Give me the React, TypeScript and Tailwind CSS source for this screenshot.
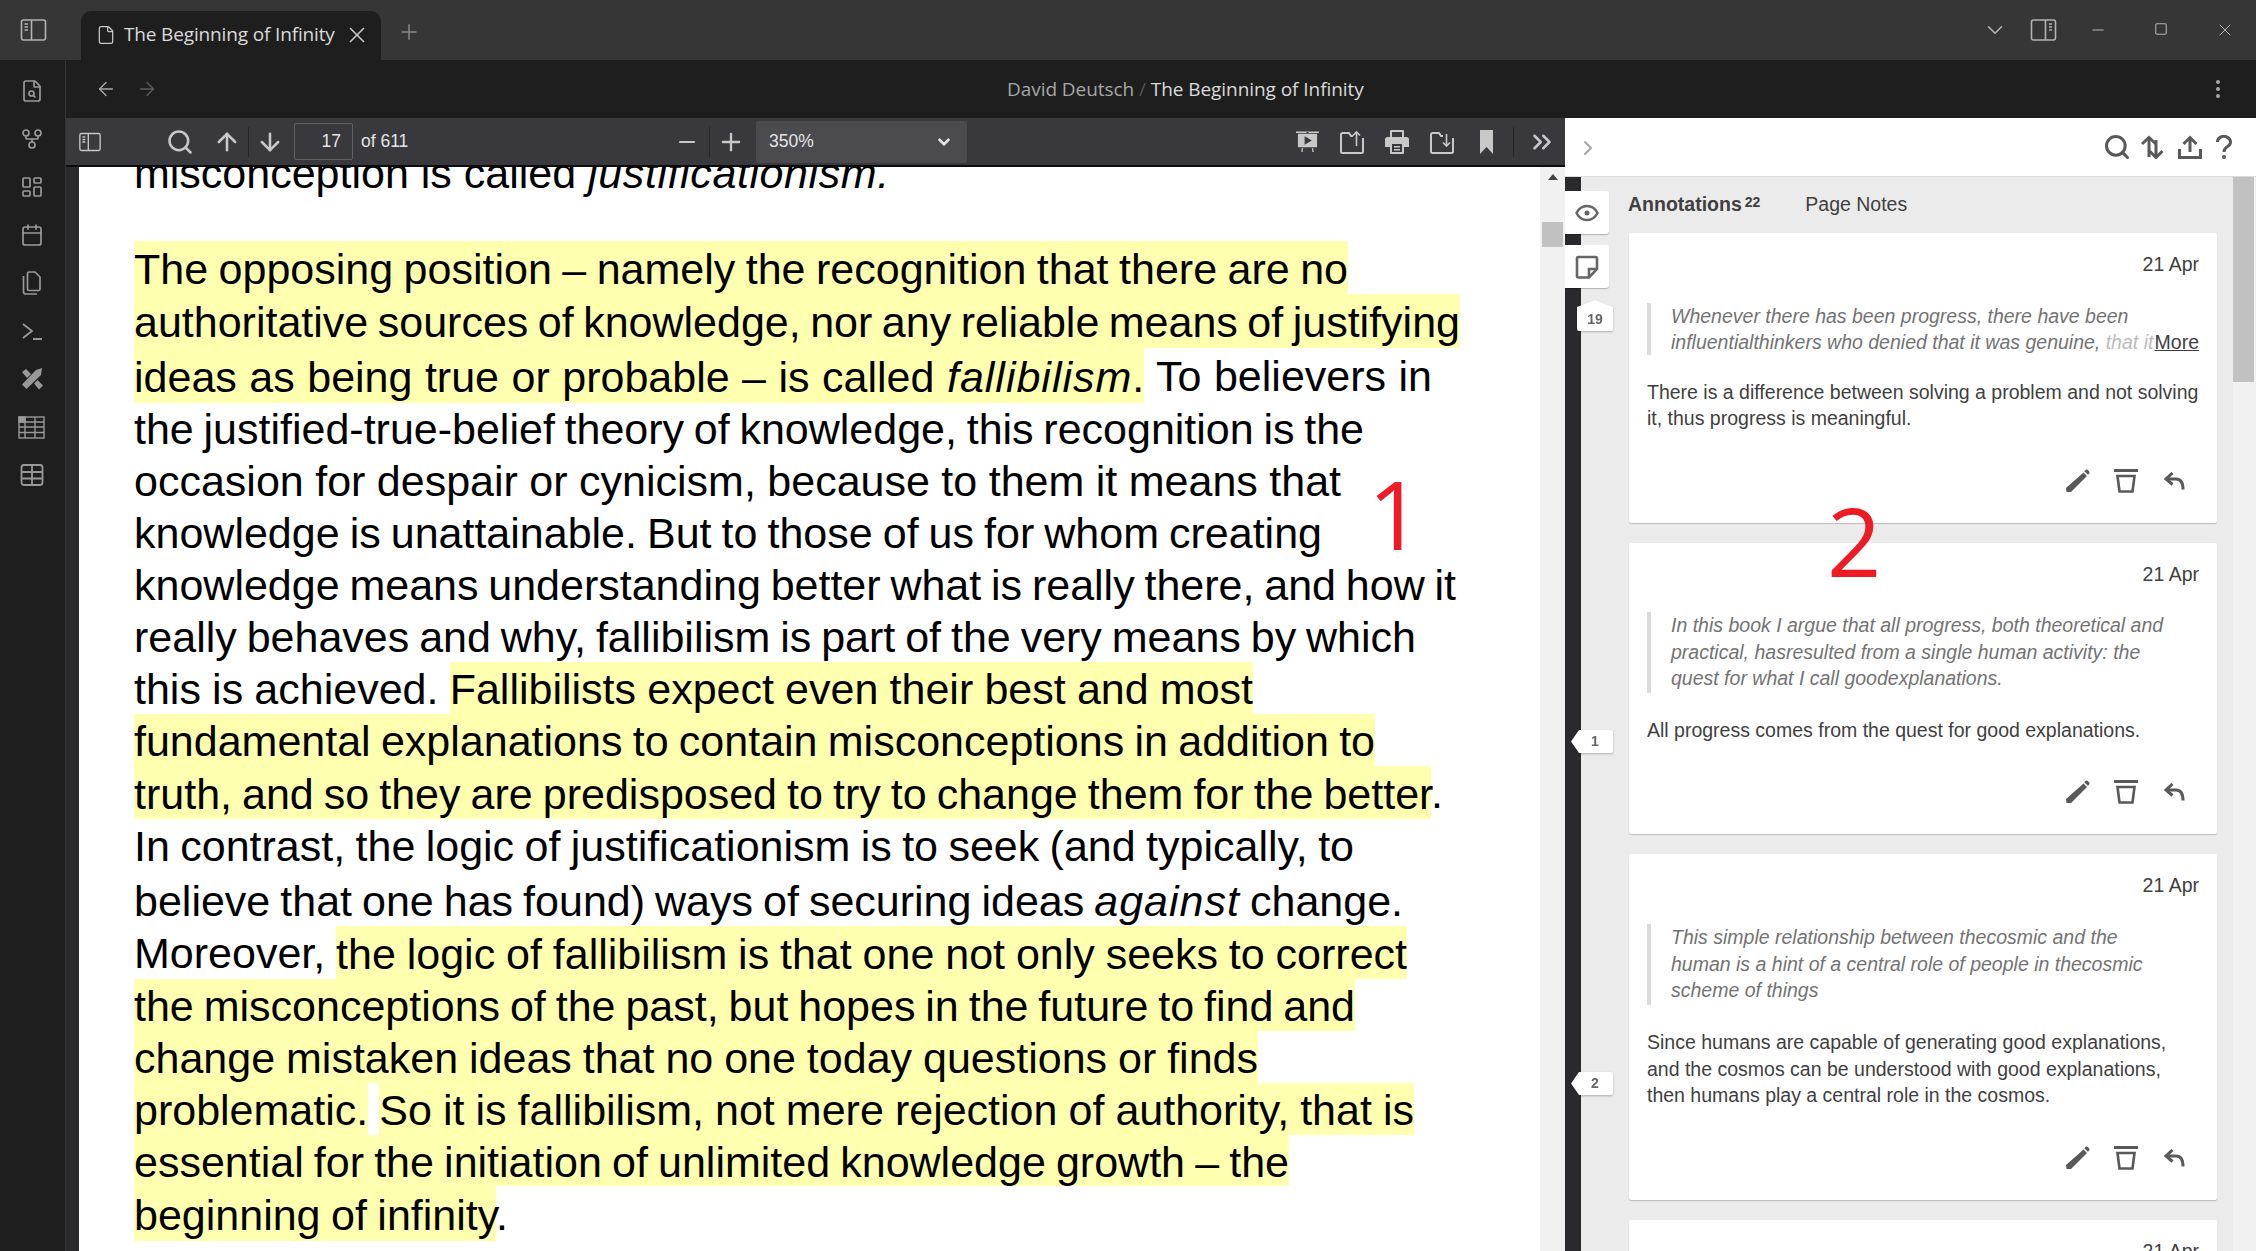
import {
  ArrowDown,
  ArrowLeft,
  ArrowRight,
  ArrowUp,
  Calendar,
  ChevronDown,
  ChevronRight,
  ChevronsRight,
  EllipsisVertical,
  File,
  FileSearch,
  GitFork,
  LayoutDashboard,
  Minus,
  Plus,
  Search,
  Square,
  X,
} from "lucide-react";

type Seg = { t: string; hl?: boolean; it?: boolean };
type Row = { box: string; pad: string; segs: Seg[] };

const rows: Row[] = [
  { box: "h-[53px] pt-[1px] leading-[53px] w-[1214px]", pad: "pt-[3.5px] pb-[1.5px]", segs: [{ t: "The opposing position – namely the recognition that there are no", hl: true }] },
  { box: "h-[54px] pt-[1px] leading-[54px] w-[1326px]", pad: "pt-[4px] pb-[2px]", segs: [{ t: "authoritative sources of knowledge, nor any reliable means of justifying", hl: true }] },
  { box: "h-[54px] pt-[1px] leading-[54px] w-[1298px]", pad: "pt-[4.5px] pb-[2.5px]", segs: [{ t: "ideas as being true or probable – is called ", hl: true }, { t: "fallibilism", hl: true, it: true }, { t: ".", hl: true }, { t: " To believers in" }] },
  { box: "h-[52px] pt-[1px] leading-[52px] w-[1230px]", pad: "", segs: [{ t: "the justified-true-belief theory of knowledge, this recognition is the" }] },
  { box: "h-[52px] pt-[1px] leading-[52px] w-[1207px]", pad: "", segs: [{ t: "occasion for despair or cynicism, because to them it means that" }] },
  { box: "h-[52px] pt-[1px] leading-[52px] w-[1188px]", pad: "", segs: [{ t: "knowledge is unattainable. But to those of us for whom creating" }] },
  { box: "h-[52px] pt-[1px] leading-[52px] w-[1322px]", pad: "", segs: [{ t: "knowledge means understanding better what is really there, and how it" }] },
  { box: "h-[52px] pt-[1px] leading-[52px] w-[1282px]", pad: "", segs: [{ t: "really behaves and why, fallibilism is part of the very means by which" }] },
  { box: "h-[52px] pt-[1px] leading-[52px] w-[1119px]", pad: "pt-[3px] pb-[1px]", segs: [{ t: "this is achieved. " }, { t: "Fallibilists expect even their best and most", hl: true }] },
  { box: "h-[52px] pt-[1px] leading-[52px] w-[1241px]", pad: "pt-[3px] pb-[1px]", segs: [{ t: "fundamental explanations to contain misconceptions in addition to", hl: true }] },
  { box: "h-[53px] pt-[1px] leading-[53px] w-[1309px]", pad: "pt-[3.5px] pb-[1.5px]", segs: [{ t: "truth, and so they are predisposed to try to change them for the better", hl: true }, { t: "." }] },
  { box: "h-[52px] pt-[1px] leading-[52px] w-[1220px]", pad: "", segs: [{ t: "In contrast, the logic of justificationism is to seek (and typically, to" }] },
  { box: "h-[55px] pt-[3px] leading-[55px] w-[1269px]", pad: "", segs: [{ t: "believe that one has found) ways of securing ideas " }, { t: "against", it: true }, { t: " change." }] },
  { box: "h-[53px] pt-[1px] leading-[53px] w-[1273px]", pad: "pt-[3.5px] pb-[1.5px]", segs: [{ t: "Moreover, " }, { t: "the logic of fallibilism is that one not only seeks to correct", hl: true }] },
  { box: "h-[52px] pt-[1px] leading-[52px] w-[1221px]", pad: "pt-[3px] pb-[1px]", segs: [{ t: "the misconceptions of the past, but hopes in the future to find and", hl: true }] },
  { box: "h-[52px] pt-[1px] leading-[52px] w-[1124px]", pad: "pt-[3px] pb-[1px]", segs: [{ t: "change mistaken ideas that no one today questions or finds", hl: true }] },
  { box: "h-[52px] pt-[1px] leading-[52px] w-[1280px]", pad: "pt-[3px] pb-[1px]", segs: [{ t: "problematic.", hl: true }, { t: " " }, { t: "So it is fallibilism, not mere rejection of authority, that is", hl: true }] },
  { box: "h-[51px] pt-[1px] leading-[51px] w-[1155px]", pad: "pt-[2.5px] pb-[0.5px]", segs: [{ t: "essential for the initiation of unlimited knowledge growth – the", hl: true }] },
  { box: "h-[52px] pt-[3px] leading-[52px] w-[374px]", pad: "pt-[5px] pb-[2px]", segs: [{ t: "beginning of infinity", hl: true }, { t: "." }] },
];

function PanelIcon({ flip = false, className = "" }: { flip?: boolean; className?: string }) {
  return (
    <svg viewBox="0 0 26 22" fill="none" stroke="currentColor" strokeWidth="1.6" className={className}>
      <rect x="1" y="1" width="24" height="20" rx="2" />
      <path d={flip ? "M15 1v20" : "M11 1v20"} />
      <path d={flip ? "M18.5 5h3M18.5 8h3M18.5 11h3" : "M4 5h3.5M4 8h3.5M4 11h3.5"} />
    </svg>
  );
}

function CopyIcon() {
  return (
    <svg viewBox="0 0 22 24" fill="none" stroke="currentColor" strokeWidth="1.7" className="h-6 w-6">
      <path d="M8 1h6l5 5v12a1.5 1.5 0 0 1-1.5 1.5H8A1.5 1.5 0 0 1 6.500 18V2.500A1.500 1.500 0 0 1 8 1Z" />
      <path d="M2.500 5v15.500A2.500 2.500 0 0 0 5 23h11" />
    </svg>
  );
}

function TerminalIcon() {
  return (
    <svg viewBox="0 0 24 24" fill="none" stroke="currentColor" strokeWidth="1.800" className="h-6 w-6">
      <path d="M3 5l9 7-9 7M13 20h9" />
    </svg>
  );
}

function ToolsIcon() {
  return (
    <svg viewBox="0 0 24 24" fill="currentColor" className="h-6 w-6">
      <path d="M22 1l-1 7L6.500 22 2 17.500 16 3Z" />
      <path d="M2 5l4-3 5 5-4 4ZM14 16.500l3.500-3.500 5.500 5.500-4 4Z" />
    </svg>
  );
}

function SheetIcon() {
  return (
    <svg viewBox="0 0 27 23" fill="none" stroke="currentColor" strokeWidth="1.400" className="h-[23px] w-[27px]">
      <rect x="1" y="1" width="25" height="21" />
      <rect x="1" y="1" width="6" height="5" fill="currentColor" />
      <path d="M1 6h25M1 11h25M1 16.500h25M7 1v21M17 1v21" />
    </svg>
  );
}

function GridIcon() {
  return (
    <svg viewBox="0 0 24 24" fill="none" stroke="currentColor" strokeWidth="1.800" className="h-6 w-6">
      <rect x="1.500" y="2" width="21" height="20" rx="2.500" />
      <path d="M1.500 9h21M1.500 15.500h21M12 2v20" />
    </svg>
  );
}

function PresentIcon() {
  return (
    <svg viewBox="0 0 24 24" fill="currentColor" className="h-[23px] w-[23px]">
      <path d="M0 1.500h24V3H13v-2h-2v2H0Z" />
      <path fillRule="evenodd" d="M2 4h20v14H2ZM9 6.500v9l7.500-4.500Z" />
      <path d="M6 19h1.500l-.6 4H5.500ZM16.500 19H18l.5 4h-1.400Z" />
    </svg>
  );
}

function FolderUpIcon({ down = false }: { down?: boolean }) {
  return (
    <svg viewBox="0 0 24 24" fill="none" stroke="currentColor" strokeWidth="2" className="h-6 w-6">
      <path d="M13 6H11L9 3H2.500A1.500 1.500 0 0 0 1 4.500V21.500A1.500 1.500 0 0 0 2.500 23h19a1.500 1.500 0 0 0 1.500-1.500V8" />
      {down ? (
        <path strokeWidth="1.600" d="M16.500 4v12M13 12.500l3.500 3.500 3.500-3.500" />
      ) : (
        <path strokeWidth="1.600" d="M16.500 16V2M13 5.500L16.500 2 20 5.500" />
      )}
    </svg>
  );
}

function PrintIcon() {
  return (
    <svg viewBox="0 0 24 24" fill="currentColor" className="h-6 w-6">
      <path fillRule="evenodd" d="M6 0h12a1 1 0 0 1 1 1v6h2.500A2.500 2.500 0 0 1 24 9.500V17h-5v6a1 1 0 0 1-1 1H6a1 1 0 0 1-1-1v-6H0V9.500A2.500 2.500 0 0 1 2.500 7H5V1a1 1 0 0 1 1-1Zm1 2v5h10V2ZM7 14v8h10v-8Zm2 2h6v1.500H9Zm0 3h6v1.500H9Z" />
    </svg>
  );
}

function BookmarkIcon() {
  return (
    <svg viewBox="0 0 13 24" fill="currentColor" className="h-6 w-[13px]">
      <path d="M0 0h13v24l-6.500-7L0 24Z" />
    </svg>
  );
}

function SortIcon() {
  return (
    <svg viewBox="0 0 24 24" fill="none" stroke="#595959" strokeWidth="3" className="h-6 w-6">
      <path d="M9 22V3M2 9l7-6.500L16 9" />
      <path d="M16 5v17M9.500 16l6.500 6.500 6.500-6.500" />
    </svg>
  );
}

function UploadIcon() {
  return (
    <svg viewBox="0 0 24 24" fill="none" stroke="#595959" strokeWidth="3" className="h-6 w-6">
      <path d="M12 17V2.500M5.500 9L12 2.500 18.500 9M1.500 14v8.500h21V14" />
    </svg>
  );
}

function HelpIcon() {
  return (
    <svg viewBox="0 0 16 24" fill="none" stroke="#595959" strokeWidth="3" className="h-6 w-4">
      <path d="M1.500 7a6.500 5.500 0 1 1 10 4.500C9 13 8 14 8 17" />
      <circle cx="8" cy="22" r="2" fill="#595959" stroke="none" />
    </svg>
  );
}

function PencilIcon() {
  return (
    <svg viewBox="0 0 25 24" fill="#595959" className="h-6 w-[25px]">
      <path d="M18.500 3.500L22 7 6 23H1.500L1 19ZM20 1.500a2 2 0 0 1 2.800-.5l1.200 1.200a2 2 0 0 1-.3 2.800l-.8.700L19.300 2.200Z" />
    </svg>
  );
}

function TrashIcon() {
  return (
    <svg viewBox="0 0 24 24" fill="none" stroke="#595959" strokeWidth="3" className="h-6 w-6">
      <path d="M0 1.500h24" />
      <path strokeWidth="2.600" d="M3.500 7l2 15.500h13L20.500 7Z" />
    </svg>
  );
}

function ReplyIcon() {
  return (
    <svg viewBox="0 0 21 18" fill="none" stroke="#595959" strokeWidth="3" className="h-[18px] w-[21px]">
      <path d="M8.500 1L2 7l6.500 5.500" />
      <path d="M2.500 7H12c4.500 0 7 3.500 7 10.500" />
    </svg>
  );
}

function Bucket({ label, up = false, className }: { label: string; up?: boolean; className: string }) {
  return (
    <div className={`absolute flex items-end justify-center drop-shadow-[0_1px_1px_rgba(0,0,0,0.25)] ${className}`}>
      <svg viewBox={up ? "0 0 36 31" : "0 0 42 23"} fill="white" className="absolute inset-0 h-full w-full">
        <path
          d={
            up
              ? "M18 0L36 7V29a2 2 0 0 1-2 2H2a2 2 0 0 1-2-2V7Z"
              : "M8 0H40a2 2 0 0 1 2 2V21a2 2 0 0 1-2 2H8L0 11.500Z"
          }
        />
      </svg>
      <span className={`relative text-[14px] leading-[23px] font-bold text-[#666] ${up ? "" : "pl-[6px]"}`}>
        {label}
      </span>
    </div>
  );
}

function Card({
  quote,
  comment,
  bar,
  body,
  foot,
  more = false,
}: {
  quote: string[];
  comment: string[];
  bar: string;
  body: string;
  foot: string;
  more?: boolean;
}) {
  return (
    <article className="rounded-[2px] bg-white px-[18px] pt-[18px] pb-[30px] text-[19.500px] leading-[26.600px] shadow-[0_1px_1px_rgba(0,0,0,0.2)]">
      <div className="h-[26px] text-right text-[#3f3f3f]">21 Apr</div>
      <div className={`relative border-l-[4px] border-[#dbdbdb] pl-[20px] text-[#737373] italic ${bar}`}>
        {quote.map((line, i) => (
          <div key={i} className="whitespace-nowrap">
            {more && i === 1 ? (
              <>
                influentialthinkers who denied that it was genuine, <span className="text-[#bcbcbc]">that it</span>
              </>
            ) : (
              line
            )}
          </div>
        ))}
        {more && (
          <a className="absolute right-0 bottom-0 bg-white text-[#3f3f3f] not-italic underline">More</a>
        )}
      </div>
      <div className={`text-[#3f3f3f] ${body}`}>
        {comment.map((line, i) => (
          <div key={i} className="whitespace-nowrap">
            {line}
          </div>
        ))}
      </div>
      <div className={`flex h-6 items-center justify-end pr-[14px] ${foot}`}>
        <PencilIcon />
        <div className="ml-[24px]">
          <TrashIcon />
        </div>
        <div className="ml-[26px]">
          <ReplyIcon />
        </div>
      </div>
    </article>
  );
}

export default function App() {
  return (
    <div className="relative flex h-[1251px] w-[2256px] flex-col overflow-hidden bg-[#1e1e1e] [font-family:'Liberation_Sans',Arial,sans-serif]">
      {/* title bar */}
      <header className="flex h-[60px] shrink-0 items-end bg-[#363636] text-[#b3b3b3]">
        <div className="mb-[19px] ml-[20px]">
          <PanelIcon className="h-[22px] w-[27px]" />
        </div>
        <div className="ml-[34px] flex h-[49px] w-[300px] items-center rounded-t-[10px] bg-[#1e1e1e] pb-[2px] pl-[15px]">
          <File size={20} strokeWidth={1.500} className="text-[#c8c8c8]" />
          <span className="ml-[8px] w-[212px] text-[19px] whitespace-nowrap text-[#dadada] [font-family:'Open_Sans',sans-serif] tracking-[-0.150px]">
            The Beginning of Infinity
          </span>
          <X size={26} strokeWidth={1.500} className="ml-[8px] text-[#c8c8c8]" />
        </div>
        <Plus size={24} strokeWidth={1.500} className="mb-[16px] ml-[16px] text-[#8a8a8a]" />
        <ChevronDown size={26} strokeWidth={1.500} className="mb-[17px] ml-auto" />
        <PanelIcon flip className="mb-[19px] ml-[22px] h-[22px] w-[27px]" />
        <Minus size={18} strokeWidth={1.500} className="mb-[21px] ml-[32px]" />
        <Square size={14} strokeWidth={1.800} className="mb-[24px] ml-[47px]" />
        <X size={20} strokeWidth={1.200} className="mb-[20px] mr-[21px] ml-[47px]" />
      </header>

      <div className="flex min-h-0 flex-1">
        {/* ribbon */}
        <nav className="flex w-[66px] shrink-0 flex-col items-center gap-[24px] border-r border-[#333] pt-[19px] pr-[2px] text-[#999]">
          <FileSearch size={24} strokeWidth={1.700} />
          <GitFork size={24} strokeWidth={1.700} />
          <LayoutDashboard size={24} strokeWidth={1.700} />
          <Calendar size={24} strokeWidth={1.700} />
          <CopyIcon />
          <TerminalIcon />
          <ToolsIcon />
          <div className="flex h-6 items-center">
            <SheetIcon />
          </div>
          <GridIcon />
        </nav>

        <div className="flex min-w-0 flex-1 flex-col">
          {/* nav bar */}
          <div className="flex h-[58px] shrink-0 items-center pl-[29px] pr-[26px] text-[#a8a8a8]">
            <ArrowLeft size={22} strokeWidth={1.500} />
            <ArrowRight size={22} strokeWidth={1.500} className="ml-[19px] text-[#5c5c5c]" />
            <div className="ml-[849px] text-[19px] whitespace-nowrap text-[#a6a6a6] [font-family:'Open_Sans',sans-serif] tracking-[-0.060px]">
              David Deutsch <span className="text-[#555]">/</span>{" "}
              <span className="text-[#dadada]">The Beginning of Infinity</span>
            </div>
            <EllipsisVertical size={24} strokeWidth={2} className="ml-auto" />
          </div>

          <div className="flex min-h-0 flex-1">
            {/* pdf viewer */}
            <section className="flex w-[1499px] shrink-0 flex-col">
              <div className="flex h-[49px] shrink-0 items-center border-b-2 border-[#0c0c0d] bg-[#38383d] pl-[13px] text-[#c8c8c8]">
                <PanelIcon className="h-[20px] w-[22px]" />
                <Search size={28} strokeWidth={2.200} className="ml-[65px]" />
                <ArrowUp size={28} strokeWidth={2.200} className="ml-[19px]" />
                <div className="ml-[7px] h-[30px] w-px bg-[#26262a]" />
                <ArrowDown size={28} strokeWidth={2.200} className="ml-[7px]" />
                <div className="ml-[10px] flex h-[37px] w-[59px] items-center justify-end rounded-[2px] border border-[#606065] pr-[11px] text-[17.500px] text-[#e4e4e4]">
                  17
                </div>
                <span className="ml-[8px] w-[47px] text-[17.500px] whitespace-nowrap text-[#e4e4e4]">of 611</span>
                <Minus size={24} strokeWidth={2.200} className="ml-[267px]" />
                <div className="ml-[10px] h-[30px] w-px bg-[#26262a]" />
                <Plus size={28} strokeWidth={2} className="ml-[7px]" />
                <div className="ml-[11px] flex h-[42px] w-[211px] items-center rounded-[2px] bg-[#4a4a4f] pl-[13px] pr-[14px] text-[17.500px] text-[#e4e4e4]">
                  350%
                  <ChevronDown size={18} strokeWidth={3.500} className="ml-auto" />
                </div>
                <div className="ml-[329px]">
                  <PresentIcon />
                </div>
                <div className="ml-[21px]">
                  <FolderUpIcon />
                </div>
                <div className="ml-[21px]">
                  <PrintIcon />
                </div>
                <div className="ml-[21px]">
                  <FolderUpIcon down />
                </div>
                <div className="ml-[26px]">
                  <BookmarkIcon />
                </div>
                <div className="ml-[20px] h-[30px] w-px bg-[#26262a]" />
                <ChevronsRight size={30} strokeWidth={2} className="ml-[13px]" />
              </div>

              <div className="flex min-h-0 flex-1">
                <div className="w-[13px] shrink-0 bg-[#2a2a2e]" />
                <div className="relative flex-1 overflow-hidden bg-white pl-[55px] text-[43px] text-black">
                  <div className="mt-[-20px] mb-[41px] h-[53px] leading-[53px] whitespace-nowrap">
                    misconception is called <em className="tracking-[0.600px]">justificationism.</em>
                  </div>
                  {rows.map((row, i) => (
                    <div
                      key={i}
                      className={`${row.box} [word-spacing:-8px] [text-align:justify] [text-align-last:justify]`}
                    >
                      {row.segs.map((seg, j) => (
                        <span
                          key={j}
                          className={`${seg.hl ? `bg-[#ffffb0] ${row.pad}` : ""} ${seg.it ? "tracking-[1px] italic" : ""}`}
                        >
                          {seg.t}
                        </span>
                      ))}
                    </div>
                  ))}
                  <span className="absolute top-[290px] left-[1289px] text-[95px] leading-[112px] text-[#ed1c24] [font-family:'Open_Sans',sans-serif]">
                    1
                  </span>
                </div>
                <div className="relative w-[25px] shrink-0 bg-[#f1f1f1]">
                  <div className="absolute top-[7px] left-[8px] h-0 w-0 border-x-[5px] border-b-[6px] border-x-transparent border-b-[#444]" />
                  <div className="absolute top-[55px] left-[2px] h-[25px] w-[21px] bg-[#c1c1c1]" />
                </div>
              </div>
            </section>

            {/* annotation sidebar */}
            <aside className="flex min-w-0 flex-1 flex-col bg-white">
              <div className="flex h-[59px] shrink-0 items-center border-b border-[#dbdbdb] pr-[24px] pl-[11px]">
                <ChevronRight size={24} strokeWidth={2} className="mr-auto mt-[2px] text-[#a6a6a6]" />
                <Search size={28} strokeWidth={2.600} className="text-[#595959]" />
                <div className="ml-[9px]">
                  <SortIcon />
                </div>
                <div className="ml-[14px]">
                  <UploadIcon />
                </div>
                <div className="ml-[14px]">
                  <HelpIcon />
                </div>
              </div>
              <div className="relative flex min-h-0 flex-1 overflow-hidden">
                <div className="w-[16px] shrink-0 bg-[#2a2a2e]" />
                <div className="min-w-0 flex-1 bg-[#ebebeb] pr-[16px] pl-[48px]">
                  <div className="flex h-[56px] items-center text-[19.500px] text-[#3f3f3f]">
                    <span className="-ml-[1px] font-bold">Annotations</span>
                    <sup className="top-[-3px] ml-[3px] text-[14px] font-bold">22</sup>
                    <span className="ml-[45px]">Page Notes</span>
                  </div>
                  <div className="flex flex-col gap-[20px]">
                    <Card
                      more
                      bar="mt-[26px] h-[52px] leading-[26px]"
                      body="mt-[24px] h-[53px] leading-[26px]"
                      foot="mt-[37px]"
                      quote={[
                        "Whenever there has been progress, there have been",
                        "influentialthinkers who denied that it was genuine, that it",
                      ]}
                      comment={[
                        "There is a difference between solving a problem and not solving",
                        "it, thus progress is meaningful.",
                      ]}
                    />
                    <Card
                      bar="mt-[25px] h-[81px]"
                      body="mt-[24px] h-[27px]"
                      foot="mt-[36px]"
                      quote={[
                        "In this book I argue that all progress, both theoretical and",
                        "practical, hasresulted from a single human activity: the",
                        "quest for what I call goodexplanations.",
                      ]}
                      comment={["All progress comes from the quest for good explanations."]}
                    />
                    <Card
                      bar="mt-[26px] h-[81px]"
                      body="mt-[24px] h-[80px]"
                      foot="mt-[37px]"
                      quote={[
                        "This simple relationship between thecosmic and the",
                        "human is a hint of a central role of people in thecosmic",
                        "scheme of things",
                      ]}
                      comment={[
                        "Since humans are capable of generating good explanations,",
                        "and the cosmos can be understood with good explanations,",
                        "then humans play a central role in the cosmos.",
                      ]}
                    />
                    <Card bar="mt-[26px] h-[53px]" body="mt-[24px]" foot="mt-[37px]" quote={[]} comment={[]} />
                  </div>
                </div>
                <div className="w-[23px] shrink-0 bg-[#f1f1f1]">
                  <div className="h-[205px] w-[21px] bg-[#c1c1c1]" />
                </div>

                <button className="absolute top-[14px] left-0 flex h-[43px] w-[44px] items-center justify-center rounded-r-[3px] bg-white text-[#666] shadow-[0_1px_1px_rgba(0,0,0,0.25)]">
                  <svg viewBox="0 0 24 24" fill="none" stroke="currentColor" strokeWidth="2.500" className="h-6 w-6">
                    <path d="M1.500 12C4 7 8 5 12 5s8 2 10.500 7C20 17 16 19 12 19s-8-2-10.500-7Z" />
                    <circle cx="12" cy="12" r="2.500" fill="currentColor" stroke="none" />
                  </svg>
                </button>
                <button className="absolute top-[68px] left-0 flex h-[43px] w-[44px] items-center justify-center rounded-r-[3px] bg-white text-[#666] shadow-[0_1px_1px_rgba(0,0,0,0.25)]">
                  <svg viewBox="0 0 24 24" fill="none" stroke="currentColor" strokeWidth="2.600" className="h-6 w-6">
                    <path d="M14 22.500H3.500A1.500 1.500 0 0 1 2 21V3.500A1.500 1.500 0 0 1 3.500 2h17A1.500 1.500 0 0 1 22 3.500V14Z" />
                    <path d="M22 14h-8v8" />
                  </svg>
                </button>
                <Bucket up label="19" className="top-[123px] left-[12px] h-[31px] w-[36px]" />
                <Bucket label="1" className="top-[553px] left-[6px] h-[23px] w-[42px]" />
                <Bucket label="2" className="top-[895px] left-[6px] h-[23px] w-[42px]" />
              </div>
            </aside>
          </div>
        </div>
      </div>

      <span className="absolute top-[475px] left-[1827px] text-[95px] leading-[130px] text-[#ed1c24] [font-family:'Open_Sans',sans-serif]">
        2
      </span>
    </div>
  );
}
